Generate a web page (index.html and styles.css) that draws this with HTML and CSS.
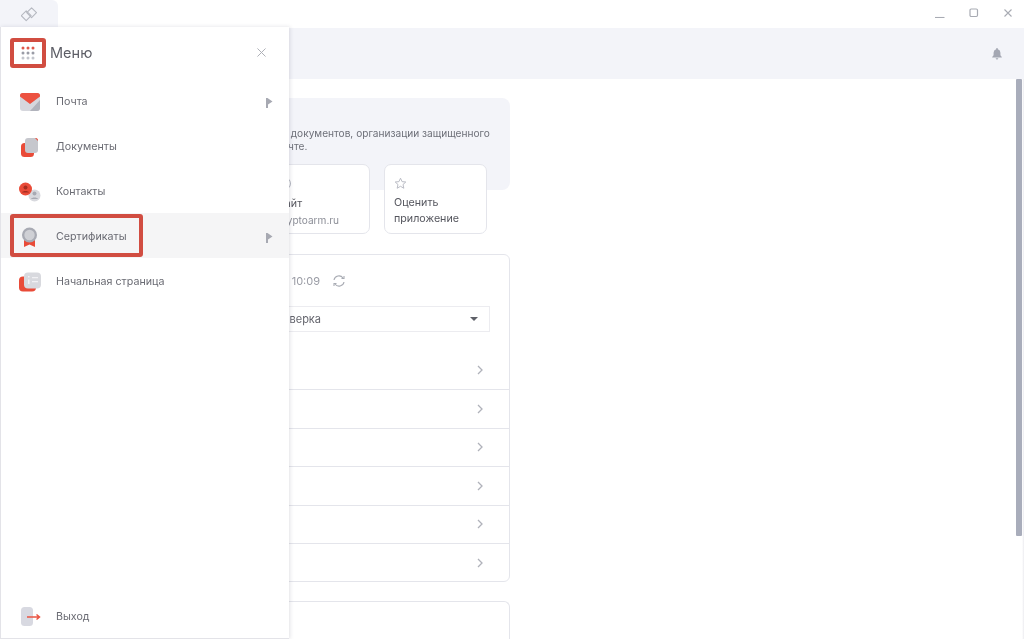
FILE: index.html
```html
<!DOCTYPE html>
<html lang="ru">
<head>
<meta charset="utf-8">
<title>Меню</title>
<link rel="stylesheet" href="styles.css">
</head>
<body>
<div class="app">
  <div class="titlebar">
    <div class="tab">
      <svg viewBox="0 0 16 16" width="16" height="16" fill="none" stroke="#b5b8c0" stroke-width="1.100" stroke-linejoin="round"><path d="M10.600.800 15.500 5.700 10.600 10.600 5.700 5.700Z"/><path d="M5.200 3.800 10.100 8.700 5.200 13.600.3 8.700Z"/></svg>
    </div>
    <div class="window-controls">
      <svg viewBox="0 0 10 10" width="10" height="10" stroke="#a8abb3" fill="none" stroke-width="1.100"><path d="M0 9.500H9.500"/></svg>
      <svg viewBox="0 0 10 10" width="10" height="10" stroke="#a8abb3" fill="none" stroke-width="1.200"><rect x="1" y="1" width="7.500" height="7.500" rx="1.200"/></svg>
      <svg viewBox="0 0 10 10" width="10" height="10" stroke="#a8abb3" fill="none" stroke-width="1.100"><path d="M1.500 1.500 8.500 8.500M8.500 1.500 1.500 8.500"/></svg>
    </div>
  </div>

  <header class="topbar">
    <svg viewBox="0 0 14 14" width="12" height="12" fill="#a4a7b3"><path d="M7 0a1 1 0 0 1 1 1v.6A4 4 0 0 1 11 5.500v3l1.600 2v.6H1.400v-.6L3 8.500v-3A4 4 0 0 1 6 1.600V1a1 1 0 0 1 1-1ZM5.500 12h3a1.500 1.500 0 0 1-3 0Z"/></svg>
  </header>

  <div class="body">
    <main class="content">
      <section class="banner">
        <p class="banner-text">Приложение для подписи, шифрования, сверки документов, организации защищенного<br>обмена данными и файлами по электронной почте.</p>
        <div class="link-cards">
          <div class="link-card">
            <span class="globe"></span>
            <div class="card-title">Сайт</div>
            <div class="card-sub">cryptoarm.ru</div>
          </div>
          <div class="link-card">
            <svg class="star" viewBox="0 0 14 14" width="13" height="13" fill="none" stroke="#b4b7c0" stroke-width="1"><path d="M7 1.300 8.700 5l4 .4-3 2.700.9 4L7 10l-3.600 2.100.9-4-3-2.700 4-.4Z"/></svg>
            <div class="card-title">Оценить<br>приложение</div>
          </div>
        </div>
      </section>

      <section class="panel">
        <div class="panel-head">
          <span>Обновлено: 10:09</span>
          <svg viewBox="0 0 14 14" width="14" height="14" fill="none" stroke="#a8abb3" stroke-width="1.100"><path d="M2 6a5 5 0 0 1 9-2M12 8a5 5 0 0 1-9 2"/><path d="M9.500 4.500H12V2M4.500 9.500H2V12"/></svg>
        </div>
        <div class="select"><span>Проверка</span><i class="caret"></i></div>
        <ul class="status-list">
          <li class="status-row first"><svg viewBox="0 0 8 10" width="8" height="10" fill="none" stroke="#b0b2ba" stroke-width="1.300"><path d="M2 1l4 4-4 4"/></svg></li>
          <li class="status-row"><svg viewBox="0 0 8 10" width="8" height="10" fill="none" stroke="#b0b2ba" stroke-width="1.300"><path d="M2 1l4 4-4 4"/></svg></li>
          <li class="status-row"><svg viewBox="0 0 8 10" width="8" height="10" fill="none" stroke="#b0b2ba" stroke-width="1.300"><path d="M2 1l4 4-4 4"/></svg></li>
          <li class="status-row"><svg viewBox="0 0 8 10" width="8" height="10" fill="none" stroke="#b0b2ba" stroke-width="1.300"><path d="M2 1l4 4-4 4"/></svg></li>
          <li class="status-row"><svg viewBox="0 0 8 10" width="8" height="10" fill="none" stroke="#b0b2ba" stroke-width="1.300"><path d="M2 1l4 4-4 4"/></svg></li>
          <li class="status-row"><svg viewBox="0 0 8 10" width="8" height="10" fill="none" stroke="#b0b2ba" stroke-width="1.300"><path d="M2 1l4 4-4 4"/></svg></li>
        </ul>
      </section>

      <section class="panel next"></section>
    </main>
    <div class="scrollbar"><div class="thumb"></div></div>
  </div>

  <aside class="drawer">
    <div class="drawer-head">
      <div class="grid-btn">
        <svg viewBox="0 0 14 14" width="14" height="14"><g fill="#e0574a"><circle cx="2" cy="2" r="1.500"/><circle cx="7" cy="2" r="1.500"/><circle cx="12" cy="2" r="1.500"/></g><g fill="#9a9ca6"><circle cx="2" cy="7" r="1.500"/><circle cx="7" cy="7" r="1.500"/><circle cx="12" cy="7" r="1.500"/></g><g fill="#c3c5cc"><circle cx="2" cy="12" r="1.500"/><circle cx="7" cy="12" r="1.500"/><circle cx="12" cy="12" r="1.500"/></g></svg>
      </div>
      <span class="drawer-title">Меню</span>
      <svg viewBox="0 0 10 10" width="9" height="9" stroke="#aeb0b7" fill="none" stroke-width="1.100"><path d="M.5.500 9.500 9.500M9.500.500.500 9.500"/></svg>
    </div>
    <nav class="menu">
      <div class="menu-item">
        <svg viewBox="0 0 24 24" width="24" height="24"><rect x="2" y="3" width="20" height="18" rx="3" fill="#d6d7dd"/><path d="M22 10v8a3 3 0 0 1-3 3h-7Z" fill="#b1b3bc"/><path d="M2 5.500A2.500 2.500 0 0 1 4.500 3h15A2.500 2.500 0 0 1 22 5.500v1L12 14 2 6.500Z" fill="#ec5140"/></svg>
        <span>Почта</span>
        <svg viewBox="0 0 8 12" width="8" height="12"><path d="M1 2h1.500L7.500 5.500 3 8.500V12H1Z" fill="#a7a9b2"/></svg>
      </div>
      <div class="menu-item">
        <svg viewBox="0 0 24 24" width="24" height="24"><rect x="3" y="8" width="13" height="14" rx="3.500" fill="#e94b38"/><rect x="7" y="3" width="13" height="15" rx="3" fill="#c6c7cd"/><path d="M17 3h.5A2.500 2.500 0 0 1 20 5.500V6Z" fill="#e94b38"/></svg>
        <span>Документы</span>
      </div>
      <div class="menu-item">
        <svg viewBox="0 0 24 24" width="24" height="24"><circle cx="16.500" cy="15.500" r="6" fill="#d8d9de"/><circle cx="16.500" cy="13.500" r="2" fill="#a8aab3"/><path d="M13 19c.5-2 6.500-2 7 0Z" fill="#a8aab3"/><circle cx="7.500" cy="9" r="6.500" fill="#e94b38"/><circle cx="7.500" cy="7.500" r="2" fill="#a62d20"/><path d="M4 12.500c.5-2 6.500-2 7 0Z" fill="#a62d20"/></svg>
        <span>Контакты</span>
      </div>
      <div class="menu-item active">
        <svg viewBox="0 0 24 24" width="24" height="24"><path d="M6 14h11v8l-5.500-2.500L6 22Z" fill="#e94b38"/><circle cx="11.500" cy="10" r="7.500" fill="#a8aab3"/><circle cx="11.500" cy="10" r="5.200" fill="#cfd0d5"/></svg>
        <span>Сертификаты</span>
        <svg viewBox="0 0 8 12" width="8" height="12"><path d="M1 2h1.500L7.500 5.500 3 8.500V12H1Z" fill="#a7a9b2"/></svg>
        <div class="callout"></div>
      </div>
      <div class="menu-item">
        <svg viewBox="0 0 24 24" width="24" height="24"><rect x="1" y="6.500" width="17" height="15" rx="4" fill="#e94b38"/><rect x="6" y="2.500" width="17" height="16" rx="4" fill="#d8d9de"/><path d="M10 6h1.500v1.500H10ZM10 9.500h1.500V14H10ZM14 7h6v1.200h-6ZM14 11h6v1.200h-6Z" fill="#f1f1f4"/></svg>
        <span>Начальная страница</span>
      </div>
    </nav>
    <div class="menu-item">
      <svg viewBox="0 0 24 24" width="24" height="24"><rect x="3" y="2" width="12" height="19" rx="3.500" fill="#d8d9e1"/><path d="M9 12H21M18.500 9.500 21.500 12 18.500 14.500" fill="none" stroke="#ea5443" stroke-width="1.500"/></svg>
      <span>Выход</span>
    </div>
  </aside>
</div>
</body>
</html>
```

FILE: styles.css
```css
* { box-sizing: border-box; }
html, body { margin: 0; height: 100%; }
body { font-family: Inter, "Liberation Sans", sans-serif; background: #fff; overflow: hidden; }
p, ul { margin: 0; padding: 0; list-style: none; }

.app { position: relative; height: 639px; width: 1024px; display: flex; flex-direction: column; overflow: hidden; filter: blur(.35px); }

.titlebar { height: 28px; flex: none; display: flex; justify-content: space-between; background: #fff; }
.tab { width: 58px; padding-top: 1px; background: #f3f4f9; border-top-right-radius: 6px; display: flex; align-items: center; justify-content: center; }
.window-controls { display: flex; gap: 24px; align-items: center; padding: 0 11px 0 0; margin-top: -2px; }

.topbar { height: 51px; flex: none; background: #f3f4f9; display: flex; align-items: center; justify-content: flex-end; padding-right: 21px; }

.body { flex: 1; display: flex; min-height: 0; }
.content { flex: 1; padding: 19px 0 0 20px; }

.banner { width: 490px; height: 92px; background: #f3f4f9; border-radius: 8px; padding: 29px 0 0 30px; }
.banner-text { font-size: 10.150px; line-height: 13px; color: #6e7079; white-space: nowrap; height: 37px; }
.link-cards { display: flex; justify-content: flex-end; gap: 14px; padding-right: 23px; }
.link-card { width: 103px; height: 70px; background: #fff; border: 1px solid #e4e5eb; border-radius: 7px; padding: 12px 9px 0; font-size: 10.700px; color: #55565e; }
.globe { display: block; width: 14px; height: 13px; border: 1px solid #b4b7c0; border-radius: 50%; margin-bottom: 6px; }
.star { display: block; margin-bottom: 5px; }
.card-title { line-height: 16px; }
.card-sub { color: #8d8f98; line-height: 16px; font-size: 10.100px; }

.panel { width: 490px; background: #fff; border: 1px solid #e4e5eb; border-radius: 6px; }
.banner + .panel { margin-top: 64px; height: 328px; }
.panel.next { height: 60px; margin-top: 19px; border-bottom: none; border-bottom-left-radius: 0; border-bottom-right-radius: 0; }
.panel-head { height: 51px; display: flex; justify-content: flex-end; align-items: center; gap: 12px; padding: 0 163px 0 0; font-size: 11px; color: #9a9ca5; }
.select { height: 26px; margin: 0 19px; border: 1px solid #ececf0; display: flex; align-items: center; justify-content: space-between; padding: 0 11px 0 227px; font-size: 11px; color: #65666e; }
.caret { width: 0; height: 0; border: 4px solid transparent; border-top: 4px solid #5e6068; border-bottom: 0; }
.status-list { margin-top: 19px; }
.status-row { height: 38.500px; border-bottom: 1px solid #e4e5eb; display: flex; align-items: center; justify-content: flex-end; padding-right: 25px; }
.status-row.first { height: 39px; }
.status-row:last-child { border-bottom: none; }

.scrollbar { width: 8px; flex: none; background: linear-gradient(to right, #fff, #fff 75%, #ececf0); }
.thumb { width: 6px; height: 457px; background: #a9adbb; border-radius: 1px; }

.drawer { position: absolute; left: 0; top: 27px; bottom: 0; width: 289px; background: #fff; border-left: 1px solid #e3e3e8; border-bottom: 1px solid #e3e3e8; box-shadow: 1px 0 4px rgba(40, 44, 70, .14); display: flex; flex-direction: column; }
.drawer-head { height: 51px; display: flex; align-items: center; padding: 0 23px 0 9px; flex: none; }
.grid-btn { width: 36px; height: 30px; border: 4px solid #d14d41; border-radius: 3px; display: flex; align-items: center; justify-content: center; }
.drawer-title { margin-left: 4px; font-size: 14.500px; color: #5d5e66; flex: 1; }
.menu { flex: 1; }
.menu-item { position: relative; height: 45px; flex: none; display: flex; align-items: center; padding: 2px 16px 0 17px; font-size: 10.700px; color: #6a6b73; }
.menu-item span { margin-left: 14px; flex: 1; }
.menu-item.active { background: #f5f5f6; }
.callout { position: absolute; left: 9px; top: 1px; width: 133px; height: 43px; border: 4px solid #d14d41; border-radius: 3px; }
```
